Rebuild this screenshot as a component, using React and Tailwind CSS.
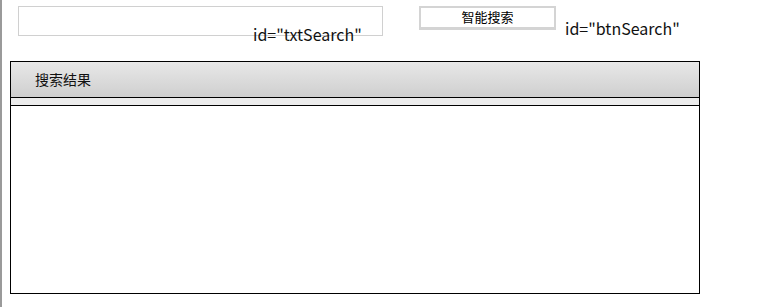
import React from "react";

export default function App() {
  const font = { fontFamily: '"Noto Sans CJK SC", "Noto Sans", sans-serif' };
  return (
    <div className="w-[767px] h-[307px] bg-white border-l-2 border-[#9a9a9a] overflow-hidden" style={font}>
      <div className="flex items-start h-[61px]">
        <input className="ml-[16px] mt-[6px] w-[365px] h-[30px] border border-[#d0d0d0] bg-white outline-none" />
        <span className="ml-[-130px] mt-[23px] w-[110px] shrink-0 whitespace-nowrap text-[16px] leading-[22px] text-[#111]">id="txtSearch"</span>
        <button className="ml-[56px] mt-[6px] w-[137px] h-[24px] shrink-0 border-[#d4d4d4] border-t-2 border-l-2 border-r-2 border-b-[3px] bg-white text-[13px] leading-[15px] text-black flex justify-center items-start pt-[1px]">
          智能搜索
        </button>
        <span className="ml-[9px] mt-[17px] whitespace-nowrap text-[16px] leading-[22px] text-[#111]">id="btnSearch"</span>
      </div>
      <div className="ml-[8px] w-[690px] h-[233px] border border-black flex flex-col">
        <div className="h-[36px] bg-gradient-to-b from-[#e8e8e8] to-[#cfcfcf] flex items-center pl-[24px] text-[14px] text-[#111] border-b border-black">
          搜索结果
        </div>
        <div className="h-[8px] bg-[#ececec] border-b border-black"></div>
        <div className="flex-1 bg-white"></div>
      </div>
    </div>
  );
}
